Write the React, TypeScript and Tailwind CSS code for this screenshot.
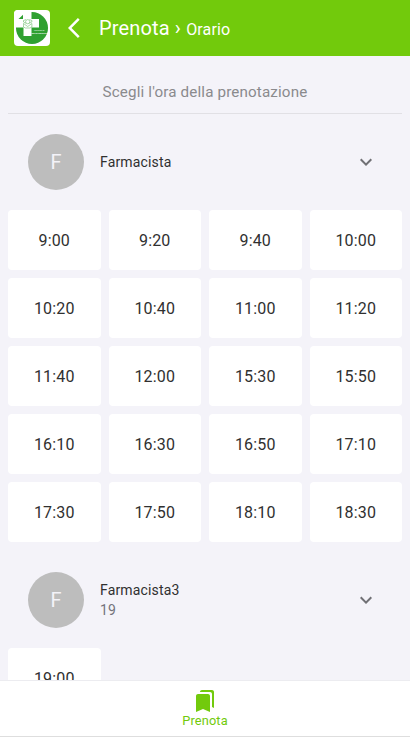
import { FC } from 'react';
import { MdBookmarks, MdExpandMore } from 'react-icons/md';

type Pharmacist = {
    name: string,
    note?: string,
    slots: string[]
}

const pharmacists: Pharmacist[] = [
    {
        name: 'Farmacista',
        slots: [
            '9:00', '9:20', '9:40', '10:00',
            '10:20', '10:40', '11:00', '11:20',
            '11:40', '12:00', '15:30', '15:50',
            '16:10', '16:30', '16:50', '17:10',
            '17:30', '17:50', '18:10', '18:30',
        ],
    },
    {
        name: 'Farmacista3',
        note: '19',
        slots: ['19:00'],
    },
];

const Logo: FC = () => (
    <svg className="size-9 shrink-0 rounded bg-white" viewBox="0 0 36 36">
        <circle cx="18" cy="18" r="16" fill="#2fa031" />
        <path d="M0 0H17.5V9H25V17.5H17.5V26H9.5V17.5H0Z" fill="#fff" />
        <path d="M4.5 9L9 4.8V9Z" fill="#2fa031" />
        <g fill="none" stroke="#2fa031" strokeOpacity="0.6" strokeWidth="0.7">
            <path d="M12 13.2L9.5 12V10.5L12 9.5M15.4 13.2L17.9 12V10.5L15.4 9.5" />
            <circle cx="13.7" cy="11.7" r="2.1" />
            <path d="M9.5 13.5V17L11.5 18H15.9L17.9 17V13.5L13.7 16.5Z" />
        </g>
        <text x="25.2" y="21.2" textAnchor="middle" fontSize="2.5" fill="#e4f5e4" fontFamily="Roboto">Farmacia</text>
        <text x="25.2" y="24" textAnchor="middle" fontSize="2" fontWeight="700" fill="#fff" fontFamily="Roboto">DALLE FARFALLE</text>
    </svg>
);

const Header: FC = () => (
    <header className="flex h-14 shrink-0 items-center bg-[#72ca0c] px-3.5 text-white">
        <Logo />
        <svg className="ml-[18px] size-6" viewBox="0 0 24 24" fill="currentColor">
            <path d="M11.67 3.87L9.9 2.1 0 12l9.9 9.9 1.77-1.77L3.54 12z" />
        </svg>
        <h1 className="ml-[7px] text-xl tracking-[0.0075em]">
            Prenota › <span className="text-base">Orario</span>
        </h1>
    </header>
);

const PharmacistSection: FC<Pharmacist> = ({ name, note, slots }) => (
    <section className="mb-2.5">
        <div className="flex items-center px-5 py-5">
            <div className="flex size-14 items-center justify-center rounded-full bg-[#bdbdbd] text-xl text-[#f4f3f9]">
                {name[0]}
            </div>
            <div className="ml-4 flex-1 text-sm tracking-[0.01071em]">
                <p className="text-[#303030]">{name}</p>
                {note && <p className="text-[#73737b]">{note}</p>}
            </div>
            <MdExpandMore className="mr-1 size-6 text-[#707075]" />
        </div>
        <div className="grid grid-cols-4 gap-2">
            {slots.map((slot) => (
                <button
                    key={slot}
                    type="button"
                    className="h-[60px] rounded bg-white pt-0.5 text-base tracking-[0.00938em] text-[#303030]"
                >
                    {slot}
                </button>
            ))}
        </div>
    </section>
);

const BottomNav: FC = () => (
    <nav className="flex h-[57px] shrink-0 flex-col items-center border-t border-b border-t-[#ececf0] border-b-[#dedede] bg-white pt-2 text-[#72ca0c]">
        <MdBookmarks className="size-6" />
        <span className="text-[12.8px] leading-4 tracking-[0.01em]">Prenota</span>
    </nav>
);

export default function App() {
    return (
        <div className="flex h-screen flex-col overflow-hidden bg-[#f4f3f9] font-['Roboto',sans-serif]">
            <Header />
            <main className="min-h-0 flex-1 overflow-hidden px-2">
                <h2 className="flex h-[58px] items-center justify-center border-b border-[#e1e0e5] pt-4 text-[15.2px] tracking-[0.00938em] text-[#8a8a8d]">
                    Scegli l&apos;ora della prenotazione
                </h2>
                {pharmacists.map((pharmacist) => (
                    <PharmacistSection key={pharmacist.name} {...pharmacist} />
                ))}
            </main>
            <BottomNav />
        </div>
    );
}
